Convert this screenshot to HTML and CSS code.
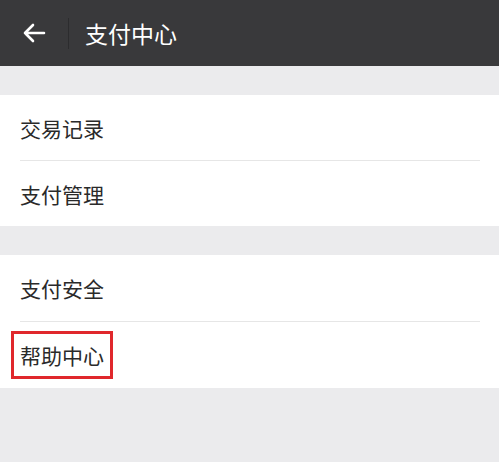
FILE: index.html
```html
<!DOCTYPE html>
<html lang="zh-CN">

<head>
    <meta charset="UTF-8">
    <meta name="viewport" content="width=device-width, initial-scale=1.0">
    <title>支付中心</title>
    <link rel="stylesheet" href="styles.css">
</head>

<body>

    <div class="top-bar">
        <div class="back-button">
            <svg width="24" height="20" viewBox="0 0 24 20">
                <path d="M22 10H3M11 2L3 10L11 18" fill="none" stroke="#fff" stroke-width="2.6" stroke-linecap="round" stroke-linejoin="round"/>
            </svg>
        </div>
        <div class="bar-divider"></div>
        <h1 class="title">支付中心</h1>
    </div>

    <div class="menu-group">
        <div class="menu-item">交易记录</div>
        <div class="menu-item">支付管理</div>
    </div>

    <div class="menu-group tall">
        <div class="menu-item">支付安全</div>
        <div class="menu-item"><span class="highlight">帮助中心</span></div>
    </div>

</body>

</html>
```

FILE: styles.css
```css
body {
    margin: 0;
    background-color: #ebebed;
    font-family: "Noto Sans CJK SC", "Noto Sans", sans-serif;
    color: #2a2a2a;
}

.top-bar {
    height: 66px;
    background-color: #39393b;
    display: flex;
    align-items: center;
}

.back-button {
    width: 68px;
    display: flex;
    align-items: center;
    padding-left: 22px;
    box-sizing: border-box;
}

.back-button svg {
    display: block;
}

.bar-divider {
    width: 1px;
    height: 31px;
    background-color: #2c2c2e;
}

.title {
    margin: 0 0 0 16px;
    color: #fff;
    font-size: 23px;
    font-weight: normal;
}

.menu-group {
    background-color: #fff;
    margin-top: 29px;
}

.menu-item {
    height: 65px;
    display: flex;
    align-items: center;
    padding: 0 20px;
    font-size: 21px;
}

.tall .menu-item {
    height: 66px;
}

/* thin line between rows, inset on both sides */
.menu-item + .menu-item {
    border-top: 1px solid #e6e6e6;
    margin: 0 19px 0 20px;
    padding: 0;
}

.highlight {
    margin-left: -9px;
    padding: 6px 6px;
    line-height: 30px;
    border: 3px solid #e0282c;
}
```
